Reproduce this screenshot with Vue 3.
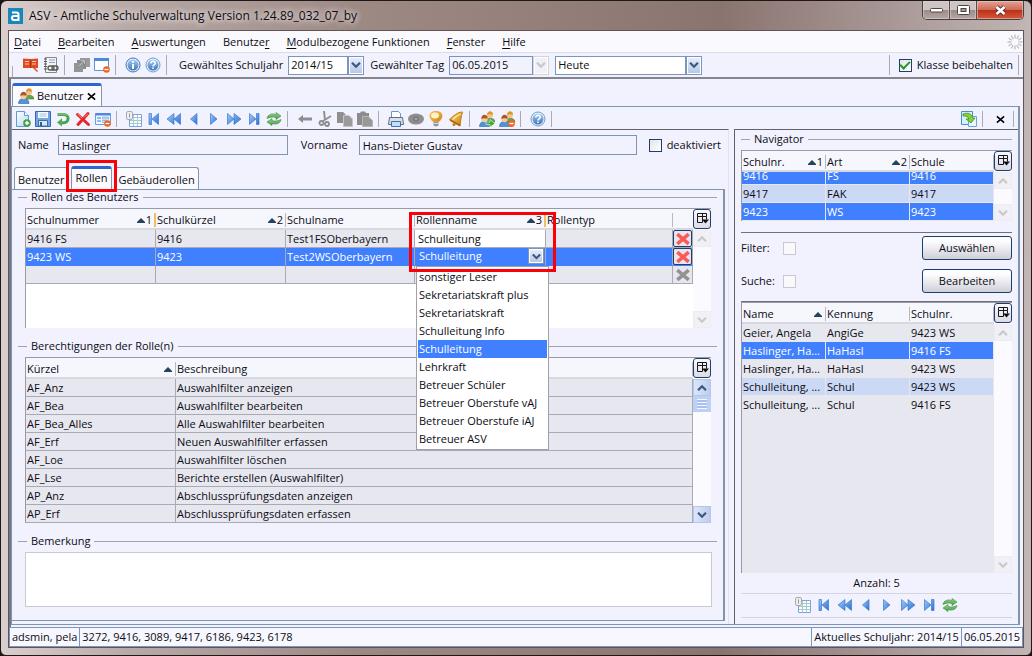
<script setup>
import { ref, onMounted } from 'vue'

const menus = [
  ['', 'D', 'atei'],
  ['', 'B', 'earbeiten'],
  ['', 'A', 'uswertungen'],
  ['Benutze', 'r', ''],
  ['', 'M', 'odulbezogene Funktionen'],
  ['', 'F', 'enster'],
  ['', 'H', 'ilfe']
]

const mainTools = [
  ['book', 'report'],
  ['stack', 'winminus'],
  ['info', 'help']
]

const editTools = [
  ['new', 'save', 'undo', 'delete', 'formminus'],
  ['list', 'first', 'rewind', 'prev', 'next', 'forward', 'last', 'refresh'],
  ['back', 'cut', 'copy', 'paste'],
  ['print', 'eye', 'bulb', 'bell'],
  ['usersgo', 'usersminus'],
  ['help']
]

const labels = {
  book: 'Handbuch', report: 'Bericht', stack: 'Fenster', winminus: 'Fenster schließen', info: 'Info', help: 'Hilfe',
  new: 'Neu', save: 'Speichern', undo: 'Rückgängig', delete: 'Löschen', formminus: 'Formular schließen',
  list: 'Liste', first: 'Erster', rewind: 'Zurückspulen', prev: 'Voriger', next: 'Nächster', forward: 'Vorspulen',
  last: 'Letzter', refresh: 'Aktualisieren', back: 'Zurück', cut: 'Ausschneiden', copy: 'Kopieren', paste: 'Einfügen',
  print: 'Drucken', eye: 'Ansicht', bulb: 'Hinweis', bell: 'Erinnerung', usersgo: 'Benutzer weiter', usersminus: 'Benutzer entfernen'
}

const roles = [
  { nr: '9416 FS', kurz: '9416', name: 'Test1FSOberbayern' },
  { nr: '9423 WS', kurz: '9423', name: 'Test2WSOberbayern' },
  { nr: '', kurz: '', name: '' }
]

const options = [
  'sonstiger Leser', 'Sekretariatskraft plus', 'Sekretariatskraft', 'Schulleitung Info', 'Schulleitung',
  'Lehrkraft', 'Betreuer Schüler', 'Betreuer Oberstufe vAJ', 'Betreuer Oberstufe iAJ', 'Betreuer ASV'
]

const rights = [
  ['AF_Anz', 'Auswahlfilter anzeigen'],
  ['AF_Bea', 'Auswahlfilter bearbeiten'],
  ['AF_Bea_Alles', 'Alle Auswahlfilter bearbeiten'],
  ['AF_Erf', 'Neuen Auswahlfilter erfassen'],
  ['AF_Loe', 'Auswahlfilter löschen'],
  ['AF_Lse', 'Berichte erstellen (Auswahlfilter)'],
  ['AP_Anz', 'Abschlussprüfungsdaten anzeigen'],
  ['AP_Erf', 'Abschlussprüfungsdaten erfassen']
]

const schools = [
  { cells: ['9416', 'FS', '9416'], cls: 'sel' },
  { cells: ['9417', 'FAK', '9417'], cls: 'alt' },
  { cells: ['9423', 'WS', '9423'], cls: 'sel' }
]

const people = [
  { cells: ['Geier, Angela', 'AngiGe', '9423 WS'], cls: '' },
  { cells: ['Haslinger, Ha...', 'HaHasl', '9416 FS'], cls: 'sel' },
  { cells: ['Haslinger, Ha...', 'HaHasl', '9423 WS'], cls: '' },
  { cells: ['Schulleitung, ...', 'Schul', '9423 WS'], cls: 'alt' },
  { cells: ['Schulleitung, ...', 'Schul', '9416 FS'], cls: '' }
]

const navTools = ['list', 'first', 'rewind', 'prev', 'next', 'forward', 'last', 'refresh']

const schoolList = ref(null)
onMounted(() => {
  schoolList.value.scrollTop = 6
})
</script>

<template>
  <div class="window">
    <svg class="defs" width="0" height="0" aria-hidden="true">
      <defs>
        <linearGradient id="gBlue" x1="0" y1="0" x2="1" y2="1"><stop offset="0" stop-color="#9ccdf8" /><stop offset="1" stop-color="#2f6fd0" /></linearGradient>
        <linearGradient id="gGreen" x1="0" y1="0" x2="0" y2="1"><stop offset="0" stop-color="#9bd88a" /><stop offset="1" stop-color="#409c46" /></linearGradient>
        <linearGradient id="gBall" x1="0" y1="0" x2="0" y2="1"><stop offset="0" stop-color="#a9cdf0" /><stop offset="1" stop-color="#3a76bd" /></linearGradient>
        <linearGradient id="gGold" x1="0" y1="0" x2="1" y2="1"><stop offset="0" stop-color="#ffd970" /><stop offset="1" stop-color="#c97a10" /></linearGradient>
        <linearGradient id="gSheet" x1="0" y1="0" x2="1" y2="1"><stop offset="0" stop-color="#ffffff" /><stop offset="1" stop-color="#b6d8f5" /></linearGradient>
      </defs>
      <symbol id="i-first" viewBox="0 0 16 16"><path d="M3 2.500h2.500v11H3zM12.500 2.500v11L6 8z" fill="url(#gBlue)" stroke="#3a78d4" stroke-width=".7" /></symbol>
      <symbol id="i-last" viewBox="0 0 16 16"><path d="M13 2.500h-2.500v11H13zM3.500 2.500v11L10 8z" fill="url(#gBlue)" stroke="#3a78d4" stroke-width=".7" /></symbol>
      <symbol id="i-rewind" viewBox="0 0 16 16"><path d="M8 2.500v11L1 8zM14.500 2.500v11L8 8z" fill="url(#gBlue)" stroke="#3a78d4" stroke-width=".7" /></symbol>
      <symbol id="i-forward" viewBox="0 0 16 16"><path d="M8 2.500v11L15 8zM1.500 2.500v11L8 8z" fill="url(#gBlue)" stroke="#3a78d4" stroke-width=".7" transform="matrix(1 0 0 1 0 0)" /></symbol>
      <symbol id="i-prev" viewBox="0 0 16 16"><path d="M11 2.500v11L4.500 8z" fill="url(#gBlue)" stroke="#3a78d4" stroke-width=".7" /></symbol>
      <symbol id="i-next" viewBox="0 0 16 16"><path d="M4.500 2.500v11L11 8z" fill="url(#gBlue)" stroke="#3a78d4" stroke-width=".7" /></symbol>
      <symbol id="i-refresh" viewBox="0 0 16 16"><g fill="url(#gGreen)" stroke="#3c8c44" stroke-width=".6"><path d="M1 7.500C1.500 3.500 6 2 10 3.500V1.500L15 5l-5 3.500v-2C7 5.500 4 6 1 7.500z" /><path d="M15 8.500C14.500 12.500 10 14 6 12.500v2L1 11l5-3.500v2C9 10.500 12 10 15 8.500z" /></g></symbol>
      <symbol id="i-list" viewBox="0 0 16 16"><path d="M3.500 3.500h12v12h-12z" fill="#fbfdff" stroke="#7aa6dc" /><path d="M4 6.500h11M4 9.500h11M4 12.500h11" stroke="#a3cdb4" /><path d="M7.500 4v11M11.500 4v11" stroke="#a9c6ea" /><rect x=".5" y=".5" width="6" height="8" rx="1.500" fill="#eeeef0" stroke="#a9a9ae" /><path d="M3.500 2.500v4" stroke="#999" /></symbol>
      <symbol id="i-new" viewBox="0 0 16 16"><path d="M1.500.5h8l4 4v11h-12z" fill="url(#gSheet)" stroke="#5d9bd8" /><path d="M9.500.5v4h4" fill="#fff" stroke="#5d9bd8" /><circle cx="12" cy="12" r="3.800" fill="#45a049" /><path d="M12 10v4M10 12h4" stroke="#fff" stroke-width="1.400" /></symbol>
      <symbol id="i-save" viewBox="0 0 16 16"><path d="M.5 .5h15v15H.5z" fill="#72a6e2" stroke="#3569ad" /><path d="M3 1h10v6H3z" fill="#f5faff" /><path d="M4.500 3h7M4.500 5h7" stroke="#9fc3e8" /><path d="M3.500 9.500h9V15h-9z" fill="#d8e7f6" stroke="#426f9e" /><path d="M5 11h2v4H5z" fill="#305f99" /></symbol>
      <symbol id="i-undo" viewBox="0 0 16 16"><path d="M2.500 3.500H9a4 4 0 0 1 0 8.200H6" fill="none" stroke="#4aa453" stroke-width="3" /><path d="M7 7.200v8.300L2 11.500z" fill="#4cab55" /><path d="M3 3H9a4 4 0 0 1 3 1.500" fill="none" stroke="#91cf86" /></symbol>
      <symbol id="i-delete" viewBox="0 0 16 16"><path d="M2.500 3.500l11 10M13 2.500L3 13.500" stroke="#e52727" stroke-width="3" stroke-linecap="round" /><path d="M3 3.500l4 3.500M12.500 3L9.500 6" stroke="#ff8d80" stroke-linecap="round" /></symbol>
      <symbol id="i-formminus" viewBox="0 0 16 16"><path d="M.5 2.500h15v11H.5z" fill="#eef6ff" stroke="#6c9ede" /><path d="M.5 2h15v2.500H.5z" fill="#4e8bdc" /><path d="M2 7h4M2 10h4" stroke="#7ba7e2" stroke-width="1.500" /><path d="M7.500 6h6v2h-6zM7.500 9.500h4v2h-4z" fill="#cfe1f7" stroke="#7ba7e2" stroke-width=".7" /><circle cx="12.500" cy="12.500" r="3.300" fill="#ee6420" /><path d="M10.500 12.500h4" stroke="#fff" stroke-width="1.300" /></symbol>
      <symbol id="i-winminus" viewBox="0 0 16 16"><path d="M.5 1.500h14v12H.5z" fill="#fff" stroke="#5c92da" /><path d="M0 1h15v3H0z" fill="#4d88dc" /><circle cx="12.500" cy="12.500" r="3.300" fill="#ee6420" /><path d="M10.500 12.500h4" stroke="#fff" stroke-width="1.300" /></symbol>
      <symbol id="i-book" viewBox="0 0 16 16"><path d="M0 1.500l7.500.5L15 1.500V11h-3l3 3-1 1-4-4H0z" fill="#e04a22" /><path d="M7.500 3v8" stroke="#a92f10" /><path d="M2 4.500h4M2 7h4M9 4.500h4M9 7h4" stroke="#ffc3ab" /></symbol>
      <symbol id="i-report" viewBox="0 0 16 16"><path d="M2.500.5h11v15h-11z" fill="#f4f4f2" stroke="#888" /><path d="M1 2h3M1 4.500h3M1 7h3M1 9.500h3M1 12h3" stroke="#555" /><path d="M6 3h6M6 5.500h6" stroke="#8aa0c0" /><rect x="5" y="9" width="6" height="4" rx="2" fill="none" stroke="#555" stroke-width="1.300" /><rect x="9" y="9" width="6" height="4" rx="2" fill="none" stroke="#555" stroke-width="1.300" /></symbol>
      <symbol id="i-stack" viewBox="0 0 16 16"><path d="M6 1h10v9H6z" fill="#9a9a9a" /><path d="M3 3h9v9H3z" fill="#8c8c8c" /><path d="M0 6h9v9H0z" fill="#949494" /><path d="M5 9l5-5M7 3.500h3.500V7" stroke="#bdbdbd" fill="none" /></symbol>
      <symbol id="i-info" viewBox="0 0 16 16"><circle cx="8" cy="8" r="7" fill="#eaf3fc" stroke="#3c75b8" /><circle cx="8" cy="8" r="5.500" fill="url(#gBall)" /><path d="M8 4v1.800M8 7v5" stroke="#fff" stroke-width="2" /></symbol>
      <symbol id="i-help" viewBox="0 0 16 16"><circle cx="8" cy="8" r="7" fill="#eaf3fc" stroke="#6e9cce" /><circle cx="8" cy="8" r="5.500" fill="url(#gBall)" /><path d="M5.800 6.500C5.800 3.500 10.500 3.700 10.200 6.500 10 8 8 7.800 8 9.500M8 10.500v1.500" fill="none" stroke="#fff" stroke-width="1.600" /></symbol>
      <symbol id="i-back" viewBox="0 0 16 16"><path d="M6 4v2.500h9v3H6V12L1 8z" fill="#8e8e90" /></symbol>
      <symbol id="i-cut" viewBox="0 0 16 16"><path d="M7 0l1 9M14 5l-8 5" stroke="#909092" stroke-width="2" /><circle cx="4.500" cy="12" r="2" fill="none" stroke="#8c8c8e" stroke-width="1.800" /><circle cx="10" cy="13" r="2" fill="none" stroke="#8c8c8e" stroke-width="1.800" /></symbol>
      <symbol id="i-copy" viewBox="0 0 16 16"><path d="M0 1h6l3 3v8H0z" fill="#8f8f91" /><path d="M6.500 4.500H12l3.500 3.500v7.500h-9z" fill="#9b9b9d" stroke="#c5c5ca" /></symbol>
      <symbol id="i-paste" viewBox="0 0 16 16"><path d="M0 2h3l1-1.500h4L9 2h3v12H0z" fill="#8c8c8e" /><path d="M5.500 5.500H11l4.500 4v6h-10z" fill="#989899" stroke="#b5b5b8" /></symbol>
      <symbol id="i-print" viewBox="0 0 16 16"><path d="M3.500.5h7l2 2V8h-9z" fill="#fff" stroke="#6698d0" /><path d="M1.500 6.500h13l1 7H.5z" fill="#dcdfe6" stroke="#666b76" /><path d="M3.500 10.500h9v5h-9z" fill="#bfe0fa" stroke="#3e72a8" /></symbol>
      <symbol id="i-eye" viewBox="0 0 16 16"><ellipse cx="8" cy="8" rx="8" ry="5.500" fill="#8e8e8e" /><circle cx="8" cy="8" r="3" fill="#7d7d7d" /><circle cx="8" cy="8" r="1.200" fill="#a5a5a5" /></symbol>
      <symbol id="i-bulb" viewBox="0 0 16 16"><path d="M8 .5c8 0 7 6.500 3 10H5C1 7 0 .5 8 .5z" fill="url(#gGold)" stroke="#df9827" stroke-width=".7" /><ellipse cx="7" cy="4.500" rx="4" ry="3" fill="#fff3bf" /><path d="M5.500 11h5v3.500l-2.500 1-2.500-1z" fill="#8d929c" /><path d="M5.500 12.500h5" stroke="#ddd" /></symbol>
      <symbol id="i-bell" viewBox="0 0 16 16"><path d="M14.500 1c-5 0-9 4-13 7.500L12 15c.5-3.500 1-10 2.500-14z" fill="url(#gGold)" stroke="#bd7a16" /><path d="M2 9l10 5.500" stroke="#a8660e" stroke-width="1.500" /><path d="M5 8.500C8 5.500 10 4 12.500 3" stroke="#ffedab" stroke-width="1.200" fill="none" /><circle cx="6" cy="13.500" r="1.500" fill="#c57b16" /></symbol>
      <symbol id="i-users" viewBox="0 0 16 16"><path d="M7 11c0-5 9-5 9 0z" fill="#67a54c" stroke="#3e7b2d" stroke-width=".6" /><circle cx="11" cy="4" r="3" fill="#f6c18f" /><path d="M8 4c0-5 6-5 6-.5-2 0-4-1-6 .5z" fill="#d99a2b" /><path d="M.5 15.500c0-7 10.500-7 10.500 0z" fill="#4e93dc" stroke="#2c67ac" stroke-width=".6" /><circle cx="5.500" cy="8" r="3.200" fill="#f8c99b" /><path d="M2.300 8c0-5.500 6.500-5.500 6.500-.5-2 0-4-1-6.500.5z" fill="#a65a21" /></symbol>
      <symbol id="i-usersgo" viewBox="0 0 16 16"><use href="#i-users" /><path d="M7 11h4V8.500l5 4-5 3.500v-2.500H7z" fill="#43a53c" stroke="#eaffea" stroke-width=".6" /></symbol>
      <symbol id="i-usersminus" viewBox="0 0 16 16"><use href="#i-users" /><circle cx="12.500" cy="12.500" r="3.400" fill="#ee6420" /><path d="M10.500 12.500h4" stroke="#fff" stroke-width="1.400" /></symbol>
      <symbol id="i-transfer" viewBox="0 0 16 16"><path d="M.5.5h11v13H.5z" fill="#d8efff" stroke="#4b8bd0" /><path d="M7.500 5.500h8v10h-8z" fill="#e8f6ff" stroke="#6aa2dc" /><path d="M2 3c5-2 9 0 9.500 4h2.500l-4 5-5-4h3C7.500 6 5 4.500 2 5z" fill="#86d232" stroke="#3e9226" stroke-width=".8" /></symbol>
      <symbol id="i-columns" viewBox="0 0 16 16"><path d="M3.500 2.500h9v3h-9zM3.500 5.500v6h5v-9M12.500 5.500v3" fill="none" stroke="#16161c" /><path d="M8 8.500h7L11.500 12.500z" fill="#111" /></symbol>
      <symbol id="i-chev" viewBox="0 0 16 16"><path d="M3.500 5.500L8 10l4.500-4.500" fill="none" stroke="currentColor" stroke-width="2.600" /></symbol>
      <symbol id="i-up" viewBox="0 0 16 16"><path d="M3.500 10.500L8 6l4.500 4.500" fill="none" stroke="currentColor" stroke-width="2.600" /></symbol>
      <symbol id="i-sort" viewBox="0 0 8 5"><path d="M4 0l4 4v1H0V4z" fill="#25435e" /></symbol>
      <symbol id="i-x" viewBox="0 0 16 16"><path d="M1.500 2.500l13 11M14.500 2.500l-13 11" stroke="currentColor" stroke-width="4" /></symbol>
      <symbol id="i-close" viewBox="0 0 10 10"><path d="M1 1.500l8 7M9 1.500l-8 7" stroke="#000" stroke-width="1.800" /></symbol>
    </svg>

    <header class="titlebar">
      <svg class="logo" width="15" height="16" viewBox="0 0 15 16"><rect width="15" height="16" fill="#1b86bd" /><path d="M4 4.500h4.500a2 2 0 0 1 2 2V12H6a2 2 0 0 1 0-4h4.500" fill="none" stroke="#fff" stroke-width="2" /></svg>
      <h1>ASV - Amtliche Schulverwaltung Version 1.24.89_032_07_by</h1>
      <div class="wincontrols">
        <button class="wmin" aria-label="Minimieren"><svg width="13" height="6" viewBox="0 0 13 6"><rect x=".5" y="1.500" width="12" height="3.500" rx="1" fill="#fff" stroke="#4d4444" /></svg></button>
        <button class="wmax" aria-label="Maximieren"><svg width="13" height="10" viewBox="0 0 13 10"><rect x=".5" y=".5" width="12" height="9" rx="1" fill="#fff" stroke="#4d4444" /><rect x="4" y="3.500" width="5" height="3" fill="#a89a97" stroke="#4d4444" /></svg></button>
        <button class="wclose" aria-label="Schließen"><svg width="13" height="11" viewBox="0 0 13 11"><path d="M2.500 2l8 7M10.500 2l-8 7" stroke="#5b3430" stroke-width="4.400" /><path d="M2.500 2l8 7M10.500 2l-8 7" stroke="#fff" stroke-width="2.600" /></svg></button>
      </div>
    </header>

    <div class="client">
      <nav class="menubar">
        <a v-for="m in menus" :key="m[1] + m[2]" href="#">{{ m[0] }}<u>{{ m[1] }}</u>{{ m[2] }}</a>
        <svg class="spinner" width="16" height="16" viewBox="-8 -8 16 16" stroke="#bcbcc2" stroke-width="1.300"><path v-for="a in 12" :key="a" d="M0-3.500V-7.500" :transform="`rotate(${a * 30})`" /></svg>
      </nav>

      <div class="toolbar main">
        <i class="grip"></i>
        <template v-for="(g, gi) in mainTools" :key="gi">
          <button v-for="t in g" :key="t" class="tool" :aria-label="labels[t]"><svg width="16" height="16"><use :href="'#i-' + t" /></svg></button>
          <i class="sep"></i>
        </template>
        <label class="year" for="year">Gewähltes Schuljahr</label>
        <span class="combo w-year"><select id="year"><option>2014/15</option></select><span class="arrow"><svg width="14" height="14"><use href="#i-chev" /></svg></span></span>
        <label for="day">Gewählter Tag</label>
        <span class="combo w-day off"><select id="day"><option>06.05.2015</option></select><span class="arrow"><svg width="14" height="14"><use href="#i-chev" /></svg></span></span>
        <span class="combo w-when"><select aria-label="Zeitpunkt"><option>Heute</option></select><span class="arrow"><svg width="14" height="14"><use href="#i-chev" /></svg></span></span>
        <i class="sep push"></i>
        <label class="check"><input type="checkbox" checked />Klasse beibehalten</label>
        <i class="sep end"></i>
      </div>

      <main class="desktop">
        <div class="doctabs">
          <button class="doctab"><svg width="16" height="16"><use href="#i-users" /></svg>Benutzer<svg width="9" height="9"><use href="#i-close" /></svg></button>
        </div>
        <div class="doc">
          <div class="toolbar edit">
            <template v-for="(g, gi) in editTools" :key="gi">
              <button v-for="t in g" :key="t" class="tool" :aria-label="labels[t]"><svg width="16" height="16"><use :href="'#i-' + t" /></svg></button>
              <i class="sep"></i>
            </template>
            <button class="tool push" aria-label="Übertragen"><svg width="16" height="16"><use href="#i-transfer" /></svg></button>
            <i class="sep"></i>
            <button class="tool" aria-label="Ansicht schließen"><svg width="9" height="9"><use href="#i-close" /></svg></button>
            <i class="sep end"></i>
          </div>

          <div class="panes">
            <section class="editor">
              <div class="person">
                <label class="l-name" for="name">Name</label>
                <input id="name" class="f-name" type="text" value="Haslinger" />
                <label class="l-first" for="first">Vorname</label>
                <input id="first" class="f-first" type="text" value="Hans-Dieter Gustav" />
                <label class="check"><input type="checkbox" />deaktiviert</label>
              </div>

              <div class="tabs">
                <button class="tab">Benutzer</button>
                <button class="tab on">Rollen<i class="mark mark-tab"></i></button>
                <button class="tab">Gebäuderollen</button>
              </div>

              <div class="tabbody">
                <h2 class="legend">Rollen des Benutzers</h2>
                <div class="grid roles">
                  <div class="view">
                    <table class="lined">
                      <colgroup><col class="c130" /><col class="c130" /><col class="c129" /><col class="c131" /><col /><col class="c20" /></colgroup>
                      <thead>
                        <tr>
                          <th class="hot"><span>Schulnummer<em><svg width="8" height="5"><use href="#i-sort" /></svg>1</em></span></th>
                          <th><span>Schulkürzel<em><svg width="8" height="5"><use href="#i-sort" /></svg>2</em></span></th>
                          <th><span>Schulname</span></th>
                          <th class="hot"><span>Rollenname<em><svg width="8" height="5"><use href="#i-sort" /></svg>3</em></span></th>
                          <th><span>Rollentyp</span></th>
                          <th></th>
                        </tr>
                      </thead>
                      <tbody>
                        <tr v-for="(r, i) in roles" :key="i" :class="{ sel: i === 1 }">
                          <td>{{ r.nr }}</td>
                          <td>{{ r.kurz }}</td>
                          <td>{{ r.name }}</td>
                          <td v-if="i === 0" class="edited">Schulleitung</td>
                          <td v-else-if="i === 1" class="choice">
                            <button class="cellcombo">Schulleitung<span class="arrow"><svg width="13" height="13"><use href="#i-chev" /></svg></span></button>
                          </td>
                          <td v-else></td>
                          <td></td>
                          <td class="act"><button class="del" :class="{ dim: i === 2 }" aria-label="Zeile löschen"><svg width="14" height="14"><use href="#i-x" /></svg></button></td>
                        </tr>
                      </tbody>
                    </table>
                  </div>
                  <div class="side off">
                    <button class="cols" aria-label="Spalten"><svg width="16" height="16"><use href="#i-columns" /></svg></button>
                    <div class="scroll"><span class="sb"><svg width="14" height="14"><use href="#i-up" /></svg></span><span class="sb"><svg width="14" height="14"><use href="#i-chev" /></svg></span></div>
                  </div>
                  <ul class="dropdown">
                    <li v-for="(o, i) in options" :key="o" :class="{ on: i === 4 }">{{ o }}</li>
                  </ul>
                  <i class="mark mark-col"></i>
                </div>

                <h2 class="legend">Berechtigungen der Rolle(n)</h2>
                <div class="grid rights">
                  <div class="view">
                    <table class="lined">
                      <colgroup><col class="c150" /><col /></colgroup>
                      <thead>
                        <tr>
                          <th><span>Kürzel<em class="lone"><svg width="8" height="5"><use href="#i-sort" /></svg></em></span></th>
                          <th><span>Beschreibung</span></th>
                        </tr>
                      </thead>
                      <tbody>
                        <tr v-for="r in rights" :key="r[0]"><td>{{ r[0] }}</td><td>{{ r[1] }}</td></tr>
                      </tbody>
                    </table>
                  </div>
                  <div class="side">
                    <button class="cols" aria-label="Spalten"><svg width="16" height="16"><use href="#i-columns" /></svg></button>
                    <div class="scroll"><span class="sb"><svg width="14" height="14"><use href="#i-up" /></svg></span><span class="thumb"></span><span class="sb"><svg width="14" height="14"><use href="#i-chev" /></svg></span></div>
                  </div>
                </div>

                <h2 class="legend">Bemerkung</h2>
                <textarea class="remark" aria-label="Bemerkung"></textarea>
              </div>
            </section>

            <aside class="navigator">
              <h2 class="legend">Navigator</h2>
              <div class="grid schools">
                <div ref="schoolList" class="view">
                  <table>
                    <colgroup><col class="c84" /><col class="c84" /><col /></colgroup>
                    <thead>
                      <tr>
                        <th><span>Schulnr.<em><svg width="8" height="5"><use href="#i-sort" /></svg>1</em></span></th>
                        <th><span>Art<em><svg width="8" height="5"><use href="#i-sort" /></svg>2</em></span></th>
                        <th><span>Schule</span></th>
                      </tr>
                    </thead>
                    <tbody>
                      <tr v-for="s in schools" :key="s.cells[0]" :class="s.cls"><td v-for="(c, i) in s.cells" :key="i">{{ c }}</td></tr>
                    </tbody>
                  </table>
                </div>
                <div class="side off">
                  <button class="cols" aria-label="Spalten"><svg width="16" height="16"><use href="#i-columns" /></svg></button>
                  <div class="scroll"><span class="sb"><svg width="14" height="14"><use href="#i-up" /></svg></span><span class="sb"><svg width="14" height="14"><use href="#i-chev" /></svg></span></div>
                </div>
              </div>

              <div class="filters">
                <label for="filter">Filter:</label><input id="filter" type="checkbox" disabled /><button class="push">Auswählen</button>
                <label for="search">Suche:</label><input id="search" type="checkbox" disabled /><button class="push">Bearbeiten</button>
              </div>

              <div class="grid people">
                <div class="view">
                  <table>
                    <colgroup><col class="c84" /><col class="c84" /><col /></colgroup>
                    <thead>
                      <tr>
                        <th><span>Name<em class="lone"><svg width="8" height="5"><use href="#i-sort" /></svg></em></span></th>
                        <th><span>Kennung</span></th>
                        <th><span>Schulnr.</span></th>
                      </tr>
                    </thead>
                    <tbody>
                      <tr v-for="(p, n) in people" :key="n" :class="p.cls"><td v-for="(c, i) in p.cells" :key="i">{{ c }}</td></tr>
                    </tbody>
                  </table>
                </div>
                <div class="side off">
                  <button class="cols" aria-label="Spalten"><svg width="16" height="16"><use href="#i-columns" /></svg></button>
                  <div class="scroll"><span class="sb"><svg width="14" height="14"><use href="#i-up" /></svg></span><span class="sb"><svg width="14" height="14"><use href="#i-chev" /></svg></span></div>
                </div>
              </div>
              <p class="count">Anzahl: 5</p>
              <div class="pager">
                <button v-for="t in navTools" :key="t" class="tool" :aria-label="labels[t]"><svg width="16" height="16"><use :href="'#i-' + t" /></svg></button>
              </div>
            </aside>
          </div>
        </div>
      </main>

      <footer class="status">
        <span>adsmin, pela</span>
        <span class="wide">3272, 9416, 3089, 9417, 6186, 9423, 6178</span>
        <span>Aktuelles Schuljahr: 2014/15</span>
        <span>06.05.2015</span>
      </footer>
    </div>
  </div>
</template>

<style>
body {
  background: #1c1416;
}
</style>

<style scoped>
* {
  box-sizing: border-box;
}
.window {
  display: flex;
  flex-direction: column;
  min-height: 100vh;
  padding: 0 7px 7px;
  border: 1px solid #201719;
  border-radius: 7px 7px 6px 6px;
  background: linear-gradient(90deg, #d9cfcd 0, #b8aaa7 12%, #9d8984 35%, #937d79 55%, #8a7470 70%, #c1b6b4 100%);
  font: 11px/14px "Open Sans", "Noto Sans", sans-serif;
  color: #0c0c14;
}
.defs {
  position: absolute;
}
button, input, select, textarea {
  margin: 0;
  padding: 0;
  border: 0;
  background: none;
  font: inherit;
  color: inherit;
}
svg {
  display: block;
  flex: none;
}
h1, h2, p, ul {
  margin: 0;
  padding: 0;
  font-weight: normal;
  list-style: none;
}
.titlebar {
  display: flex;
  align-items: center;
  height: 29px;
}
h1 {
  margin-left: 6px;
  font-size: 12px;
  line-height: 16px;
  text-shadow: 0 0 6px #f0e8e6, 0 0 6px #f0e8e6;
}
.wincontrols {
  display: flex;
  align-self: flex-start;
  margin-left: auto;
  border: 1px solid #4b3f3f;
  border-top: 0;
  border-radius: 0 0 5px 5px;
  overflow: hidden;
}
.wincontrols button {
  display: flex;
  align-items: center;
  justify-content: center;
  height: 18px;
  width: 27px;
  border-right: 1px solid #5a4c4b;
  background: linear-gradient(#cdc4c3 50%, #9b8b88 50%, #b5a7a4);
  box-shadow: inset 0 0 0 1px #e0d8d688;
}
.wincontrols .wclose {
  width: 46px;
  border: 0;
  background: linear-gradient(#e2a295 0, #d26a55 48%, #b8301a 50%, #d8583a);
}
.client {
  display: flex;
  flex-direction: column;
  flex: 1;
  border: 1px solid #5f5453;
  background: #f2f2fe;
}
.menubar {
  display: flex;
  align-items: center;
  gap: 17px;
  height: 22px;
  padding-left: 5px;
  border-bottom: 1px solid #dcdce8;
  background: #fafafe;
}
.menubar a {
  color: inherit;
  text-decoration: none;
}
.menubar u {
  text-underline-offset: 2px;
}
.spinner {
  margin-left: auto;
}
.toolbar {
  display: flex;
  align-items: center;
}
.toolbar.main {
  height: 26px;
  border-bottom: 2px solid #858590;
  padding-left: 3px;
}
.grip {
  align-self: flex-end;
  width: 9px;
  height: 11px;
  border-left: 1px solid #aaaab4;
}
.tool {
  display: flex;
  align-items: center;
  justify-content: center;
  width: 20px;
  height: 20px;
}
.sep {
  flex: none;
  align-self: stretch;
  width: 8px;
  margin: 2px 0 2px 3px;
  border-left: 1px solid #aaaab4;
}
.sep.end {
  width: 5px;
}
.sep.push, .tool.push {
  margin-left: auto;
}
.year {
  margin-left: 5px;
}
.combo {
  display: flex;
  height: 19px;
  margin: 0 6px 0 5px;
}
.combo select {
  flex: 1;
  min-width: 0;
  padding: 0 2px;
  border: 1px solid #7a96c0;
  background: #fff;
  appearance: none;
}
.combo.off select {
  background: #f2f2fe;
}
.combo.w-when {
  margin-left: 0;
}
.w-year {
  width: 76px;
}
.w-day {
  width: 100px;
}
.w-when {
  width: 147px;
}
.arrow {
  display: flex;
  align-items: center;
  justify-content: center;
  width: 16px;
  border: 1px solid #7a96c0;
  background: linear-gradient(#e9effb, #b4c6e4);
  box-shadow: inset 0 0 0 1px #fff;
  color: #3b587f;
}
.off .arrow {
  border-color: #d3d3dd;
  background: #f0f0f6;
  color: #c6c6cc;
}
.check {
  display: flex;
  align-items: center;
  gap: 5px;
}
.toolbar .check {
  margin: 0 2px;
}
input[type="checkbox"] {
  display: flex;
  align-items: center;
  justify-content: center;
  width: 13px;
  height: 13px;
  border: 1px solid #1f3d6d;
  background: linear-gradient(135deg, #e4e4e4, #fff);
  appearance: none;
}
input[type="checkbox"]:checked::before {
  content: "";
  width: 8px;
  height: 4px;
  margin-bottom: 3px;
  border: solid #1f9a2a;
  border-width: 0 0 2px 2px;
  transform: rotate(-45deg);
}
input[type="checkbox"]:disabled {
  border-color: #c9c9d0;
  background: #f9f9fb;
}
.desktop {
  display: flex;
  flex-direction: column;
  flex: 1;
  padding: 4px 3px 2px 0;
  border-left: 2px solid #767683;
}
.doctabs {
  display: flex;
  height: 23px;
  padding-left: 1px;
}
.doctab {
  display: flex;
  align-items: center;
  gap: 3px;
  height: 23px;
  padding: 0 5px;
  border: 1px solid #8095b0;
  border-top: 3px solid #2f66cc;
  border-bottom: 0;
  border-radius: 3px 3px 0 0;
  background: #fafaff;
}
.doc {
  display: flex;
  flex-direction: column;
  flex: 1;
  border: 1px solid #8095b0;
  border-right-width: 2px;
}
.toolbar.edit {
  height: 22px;
  padding: 2px 0 0 1px;
}
.panes {
  display: flex;
  flex: 1;
  gap: 5px;
}
.editor {
  display: flex;
  flex-direction: column;
  flex: 1;
  min-width: 0;
  padding: 0 3px 3px 0;
  border-top: 1px solid #62626e;
  border-right: 1px solid #e2e2ec;
}
.person {
  display: flex;
  align-items: center;
  height: 30px;
  padding: 0 4px 0 6px;
}
.person input[type="text"] {
  height: 20px;
  min-width: 0;
  padding: 0 3px;
  border: 1px solid #7f95b4;
}
.l-name {
  width: 40px;
}
.l-first {
  width: 58px;
  margin-left: 13px;
}
.f-name {
  flex: 230;
}
.f-first {
  flex: 280;
  margin-right: 12px;
}
.tabs {
  display: flex;
  align-items: flex-end;
  height: 29px;
  padding-left: 2px;
}
.tab {
  position: relative;
  height: 22px;
  padding: 3px 3px 0;
  border: 1px solid #8095b0;
  border-bottom: 0;
  border-radius: 3px 3px 0 0;
  background: #fafaff;
}
.tab.on {
  z-index: 1;
  height: 23px;
  margin: 0 2px;
  padding: 0 4px 2px;
  border-top: 3px solid #2f66cc;
}
.mark {
  position: absolute;
  z-index: 4;
  border: 3px solid #fb0007;
  pointer-events: none;
}
.mark-tab {
  inset: -9px -6px -3px;
}
.mark-col {
  left: 384px;
  top: 3px;
  width: 147px;
  height: 60px;
}
.tabbody {
  display: flex;
  flex-direction: column;
  flex: 1;
  padding: 0 6px 13px;
  border: solid #8095b0;
  border-width: 1px 2px 1px 0;
}
.legend {
  display: flex;
  align-items: center;
  gap: 4px;
  font-size: 11px;
  line-height: 14px;
}
.legend::before, .legend::after {
  content: "";
  width: 9px;
  height: 1px;
  background: #a2a2ae;
}
.legend::after {
  flex: 1;
}
.grid {
  position: relative;
  display: flex;
  border-top: 1px solid #9a9aa6;
}
.view {
  flex: 1;
  min-width: 0;
  overflow: hidden;
  border-left: 1px solid #9a9aa6;
  background: #e7e7ef;
}
.roles {
  height: 120px;
  margin: 4px 6px 11px 7px;
}
.roles .view {
  background: #fff;
}
.rights {
  height: 166px;
  margin: 4px 6px 11px 7px;
}
table {
  width: 100%;
  border-spacing: 0;
  table-layout: fixed;
}
.c130 { width: 130px; }
.c129 { width: 129px; }
.c131 { width: 131px; }
.c150 { width: 150px; }
.c20 { width: 20px; }
.c84 { width: 84px; }
th {
  position: sticky;
  top: 0;
  height: 21px;
  padding: 4px 0 1px;
  border-bottom: 2px solid #d8d8e0;
  background: #f6f6fd;
  font-weight: normal;
  text-align: left;
}
th span {
  display: flex;
  align-items: center;
  height: 14px;
  padding-left: 1px;
  border-right: 1px solid #b8b8c2;
}
th.hot span {
  border-right: 2px solid #f5bd62;
}
th em {
  display: flex;
  align-items: center;
  gap: 1px;
  margin-left: auto;
  padding-right: 2px;
  font-style: normal;
}
th em.lone {
  padding-right: 3px;
}
th:empty::before {
  content: "";
  display: block;
  height: 14px;
}
td {
  height: 18px;
  padding: 0 1px;
  line-height: 16px;
  overflow: hidden;
  white-space: nowrap;
  background: #e7e7ef;
  border-bottom: 1px solid #e7e7ef;
}
.lined td {
  border: solid #aaaab4;
  border-width: 0 1px 1px 0;
}
.sel td {
  background: #4080ff;
  color: #fff;
}
.lined .sel td {
  border-bottom-color: #4080ff;
}
.schools td, .people td {
  border-right: 1px solid #e7e7ef;
}
.alt td {
  background: #ccd9f5;
}
.lined td.edited {
  padding-left: 3px;
  background: #fff;
}
.lined td.choice {
  padding: 0;
}
.cellcombo {
  display: flex;
  width: 100%;
  height: 17px;
  padding: 0 1px 0 4px;
  line-height: 16px;
}
.cellcombo .arrow {
  margin-left: auto;
  height: 16px;
}
.lined td.act {
  padding: 0;
}
.del {
  display: flex;
  align-items: center;
  justify-content: center;
  width: 19px;
  height: 17px;
  border: 1px solid #1f3d6d;
  border-radius: 2px;
  background: #e6e6f0;
  color: #fb5a55;
}
.del.dim {
  border-color: transparent;
  color: #929292;
}
.side {
  display: flex;
  flex-direction: column;
  width: 18px;
  background: #fafaff;
}
.cols {
  display: flex;
  align-items: center;
  justify-content: center;
  height: 20px;
  margin-bottom: 1px;
  border: 1px solid #1f3d6d;
  border-radius: 3px;
  background: linear-gradient(#f8f8fc, #dcdce6);
}
.scroll {
  display: flex;
  flex-direction: column;
  flex: 1;
}
.sb {
  display: flex;
  align-items: center;
  justify-content: center;
  height: 17px;
  border: 1px solid #b4c6ea;
  background: linear-gradient(90deg, #dbe6fb, #bfcdec);
  color: #3b587f;
}
.sb:last-child {
  margin-top: auto;
}
.off .sb {
  border-color: #ececf2;
  background: #f0f0f5;
  color: #c9c9ce;
}
.thumb {
  height: 16px;
  border: solid #bdd0f5;
  border-width: 3px 4px;
  background: repeating-linear-gradient(#f4f8ff 0 1px, #a9c0ec 1px 3px);
}
.dropdown {
  position: absolute;
  z-index: 3;
  left: 391px;
  top: 57px;
  width: 133px;
  padding: 1px;
  border: 1px solid #a0a0ac;
  background: #fff;
}
.dropdown li {
  padding-left: 1px;
  line-height: 18px;
}
.dropdown .on {
  background: #4080ff;
  color: #fff;
}
.remark {
  display: block;
  flex: 1;
  min-height: 54px;
  margin: 4px 5px 0 7px;
  border: 1px solid #c9c9d2;
  background: #fff;
  resize: none;
}
.navigator {
  display: flex;
  flex-direction: column;
  flex: none;
  width: 284px;
  padding: 2px 6px 6px;
  border: solid #62626e;
  border-width: 1px 0 0 1px;
}
.schools {
  height: 71px;
  margin-top: 4px;
}
.filters {
  display: grid;
  grid-template-columns: 36px 1fr 90px;
  gap: 9px 6px;
  align-items: center;
  margin-top: 11px;
  padding: 3px 0 8px;
  border-top: 1px solid #707078;
  border-bottom: 1px solid #707078;
}
.filters .push {
  height: 24px;
  border: 1px solid #1f3d6d;
  border-radius: 3px;
  background: linear-gradient(#fdfdff 20%, #cfcfd9);
}
.people {
  flex: 1;
}
.count {
  padding: 3px 0;
  text-align: center;
}
.pager {
  display: flex;
  justify-content: center;
  gap: 1px;
  padding: 1px 0 2px;
  border: solid #d5d5e2;
  border-width: 1px 0;
}
.status {
  display: flex;
  gap: 1px;
  height: 20px;
  border: 1px solid #7a96c0;
  background: #7a96c0;
}
.status span {
  padding: 0 2px;
  background: #f7f7ff;
  line-height: 18px;
  white-space: nowrap;
}
.status .wide {
  flex: 1;
}
</style>
